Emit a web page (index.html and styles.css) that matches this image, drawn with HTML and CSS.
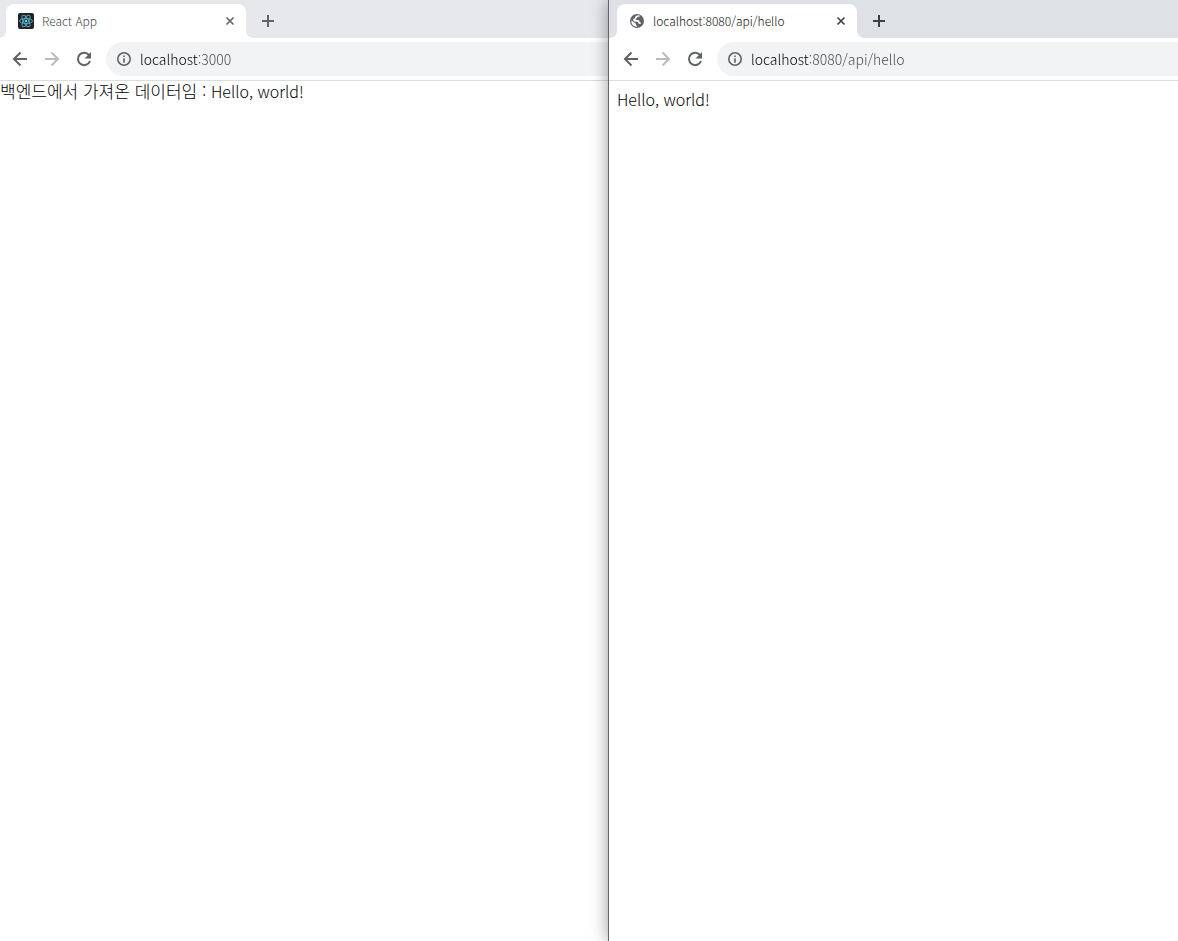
FILE: index.html
```
<!DOCTYPE html>
<html lang="ko">
<head>
  <meta charset="UTF-8" />
  <title>React App</title>
  <link rel="stylesheet" href="styles.css">
</head>
<body>

  <!-- icons used by both windows -->
  <svg class="icon-defs" aria-hidden="true">
    <symbol id="arrow" viewBox="0 0 16 16">
      <path d="M15 8H2M8.5 1.5L2 8l6.5 6.5" fill="none" stroke="currentColor" stroke-width="2" />
    </symbol>
    <symbol id="reload" viewBox="0 0 16 16">
      <path d="M13.4 4.6A6.2 6.2 0 1 0 14 10" fill="none" stroke="currentColor" stroke-width="2" />
      <path d="M15 1v6.5H8.5z" fill="currentColor" />
    </symbol>
    <symbol id="info" viewBox="0 0 16 16">
      <circle cx="8" cy="8" r="6.2" fill="none" stroke="currentColor" stroke-width="1.6" />
      <path d="M7.2 4.4h1.6V6H7.2zM7.2 7.2h1.6v4.5H7.2z" fill="currentColor" />
    </symbol>
    <symbol id="close" viewBox="0 0 10 10">
      <path d="M1.500 1.500l7 7M8.500 1.500l-7 7" stroke="currentColor" stroke-width="1.6" />
    </symbol>
    <symbol id="plus" viewBox="0 0 12 12">
      <path d="M6 0v12M0 6h12" stroke="currentColor" stroke-width="2" />
    </symbol>
  </svg>

  <div class="desktop">

    <!-- React app -->
    <section class="window back-window">
      <div class="tab-bar">
        <div class="tab">
          <svg class="favicon" viewBox="0 0 16 16">
            <rect width="16" height="16" rx="2" fill="#222" />
            <g fill="none" stroke="#53a9c7" stroke-width="1">
              <ellipse cx="8" cy="8" rx="6.5" ry="2.5" />
              <ellipse cx="8" cy="8" rx="6.5" ry="2.5" transform="rotate(60 8 8)" />
              <ellipse cx="8" cy="8" rx="6.5" ry="2.5" transform="rotate(120 8 8)" />
            </g>
            <circle cx="8" cy="8" r="1.3" fill="#61dafb" />
          </svg>
          <span class="tab-title">React App</span>
          <button class="close-tab" type="button" aria-label="Close tab"><svg><use href="#close" /></svg></button>
        </div>
        <button class="new-tab" type="button" aria-label="New tab"><svg><use href="#plus" /></svg></button>
      </div>
      <div class="toolbar">
        <button class="nav" type="button" aria-label="Back"><svg><use href="#arrow" /></svg></button>
        <button class="nav forward" type="button" aria-label="Forward" disabled><svg><use href="#arrow" /></svg></button>
        <button class="nav" type="button" aria-label="Reload"><svg><use href="#reload" /></svg></button>
        <label class="address">
          <svg><use href="#info" /></svg>
          <input type="text" value="localhost:3000" aria-label="Address" spellcheck="false" />
        </label>
      </div>
      <main class="page"><span class="korean">백엔드에서 가져온 데이터임 : </span>Hello, world!</main>
    </section>

    <!-- API response -->
    <section class="window front-window">
      <div class="tab-bar">
        <div class="tab">
          <svg class="favicon" viewBox="0 0 16 16">
            <circle cx="8" cy="8" r="7" fill="#5f6368" />
            <path d="M10.500 3.200C8.500 2.600 6.800 3.600 6.600 5.300c-.1 1-1 .9-1.600 1.200 0 1 .6 1.400 1.600 1.400h2c1 0 1.300.5 1.300 1.300 0 .9.8 1 1.800 1" fill="none" stroke="#fff" stroke-width="1.700" />
            <path d="M2.400 7.500l4.600 3.300v1c.1.600.5.900 1.200.9v1c-3.600.1-6.200-2.700-5.800-6.200z" fill="#fff" />
          </svg>
          <span class="tab-title">localhost:8080/api/hello</span>
          <button class="close-tab" type="button" aria-label="Close tab"><svg><use href="#close" /></svg></button>
        </div>
        <button class="new-tab" type="button" aria-label="New tab"><svg><use href="#plus" /></svg></button>
      </div>
      <div class="toolbar">
        <button class="nav" type="button" aria-label="Back"><svg><use href="#arrow" /></svg></button>
        <button class="nav forward" type="button" aria-label="Forward" disabled><svg><use href="#arrow" /></svg></button>
        <button class="nav" type="button" aria-label="Reload"><svg><use href="#reload" /></svg></button>
        <label class="address">
          <svg><use href="#info" /></svg>
          <input type="text" value="localhost:8080/api/hello" aria-label="Address" spellcheck="false" />
        </label>
      </div>
      <main class="page">Hello, world!</main>
    </section>

  </div>

</body>
</html>
```
FILE: styles.css
```
* {
  box-sizing: border-box;
}

body {
  margin: 0;
  font-family: "Noto Sans CJK KR", sans-serif;
  font-weight: 300;
  color: #000;
}

.icon-defs {
  display: none;
}

.desktop {
  display: grid;
  grid-template-columns: 608fr 570fr;
  min-height: 100vh;
}

.window {
  min-width: 0;
  background: #fff;
}

.front-window {
  position: relative;
  border-left: 1px solid #666;
  box-shadow: 0 0 16px rgba(0, 0, 0, 0.4);
}

button {
  display: flex;
  align-items: center;
  justify-content: center;
  flex: none;
  padding: 0;
  border: none;
  background: none;
  color: #5f6368;
}

/* tabs */
.tab-bar {
  display: flex;
  height: 38px;
  padding: 4px 6px 0;
  background: #e7e8ec;
}

.front-window .tab-bar {
  padding-left: 8px;
  background: #dee1e6;
}

.tab {
  position: relative;
  display: flex;
  align-items: center;
  width: 240px;
  padding: 0 8px 0 12px;
  border-radius: 8px 8px 0 0;
  background: #fff;
}

/* curved feet of the tab */
.tab::before,
.tab::after {
  content: "";
  position: absolute;
  bottom: 0;
  width: 8px;
  height: 8px;
}

.tab::before {
  left: -8px;
  background: radial-gradient(circle at 0 0, transparent 8px, #fff 8px);
}

.tab::after {
  right: -8px;
  background: radial-gradient(circle at 100% 0, transparent 8px, #fff 8px);
}

.favicon {
  width: 16px;
  height: 16px;
  margin-right: 8px;
}

.tab-title {
  flex: 1;
  font-size: 12px;
  line-height: 16px;
  color: #45494d;
}

.front-window .tab-title {
  color: #111;
}

.front-window .close-tab,
.front-window .new-tab {
  color: #3c4043;
}

.close-tab {
  width: 16px;
  height: 16px;
}

.close-tab svg {
  width: 10px;
  height: 10px;
}

.new-tab {
  width: 28px;
  height: 34px;
  margin-left: 8px;
}

.new-tab svg {
  width: 12px;
  height: 12px;
}

/* toolbar */
.toolbar {
  display: flex;
  align-items: center;
  height: 43px;
  padding-left: 4px;
  border-bottom: 1px solid #dadce0;
}

.front-window .toolbar {
  padding-left: 6px;
}

.nav {
  width: 32px;
  height: 32px;
}

.nav svg {
  width: 16px;
  height: 16px;
}

.forward {
  color: #babcbe;
}

.forward svg {
  transform: scaleX(-1);
}

.address {
  display: flex;
  align-items: center;
  flex: 1;
  min-width: 0;
  height: 34px;
  margin-left: 6px;
  padding-left: 10px;
  border-radius: 17px 0 0 17px;
  background: #f1f3f4;
  color: #5f6368;
}

.address svg {
  flex: none;
  width: 16px;
  height: 16px;
  margin-right: 8px;
}

/* host name is dark, the rest of the address is grey */
.address input {
  flex: 1;
  min-width: 0;
  padding: 0;
  border: none;
  outline: none;
  background: linear-gradient(to right, #000 58px, #45494d 58px);
  -webkit-background-clip: text;
  background-clip: text;
  color: transparent;
  font: inherit;
  font-size: 14px;
  line-height: 20px;
}

/* page content */
.page {
  font-size: 16px;
  line-height: 20px;
}

.korean {
  font-size: 17px;
}

.front-window .page {
  padding: 8px;
}
```
